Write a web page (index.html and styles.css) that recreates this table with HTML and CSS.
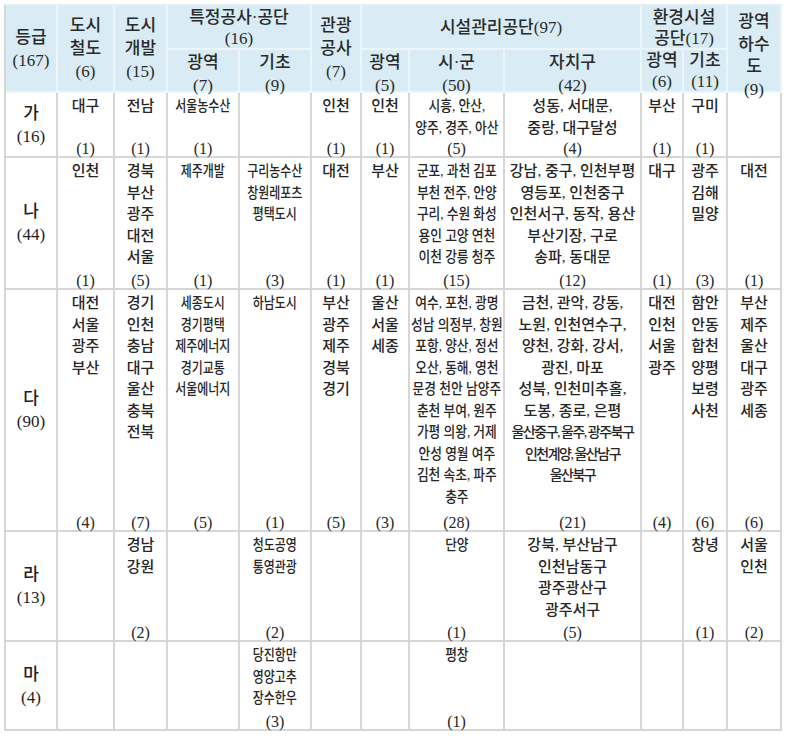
FILE: index.html
```html
<!DOCTYPE html>
<html lang="ko">
<head>
<meta charset="utf-8">
<title>등급별 지방공기업</title>
<link rel="stylesheet" href="styles.css">
</head>
<body>
<div class="sheet">
  <div class="grid">
    <div class="h mid r2">등급<br>(167)</div>
    <div class="h mid r2">도시<br>철도<br>(6)</div>
    <div class="h mid r2">도시<br>개발<br>(15)</div>
    <div class="h top c2">특정공사·공단<br>(16)</div>
    <div class="h mid r2">관광<br>공사<br>(7)</div>
    <div class="h mid c3">시설관리공단(97)</div>
    <div class="h top c2">환경시설<br>공단(17)</div>
    <div class="h top r2 tight">광역<br>하수<br>도<br>(9)</div>
    <div class="h sub">광역<br>(7)</div>
    <div class="h sub">기초<br>(9)</div>
    <div class="h sub">광역<br>(5)</div>
    <div class="h sub">시·군<br>(50)</div>
    <div class="h sub">자치구<br>(42)</div>
    <div class="h sub sm">광역<br>(6)</div>
    <div class="h sub sm">기초<br>(11)</div>

    <!-- 가 -->
    <div class="lab">가<br>(16)</div>
    <div class="c"><div class="t">대구</div><div class="n">(1)</div></div>
    <div class="c"><div class="t">전남</div><div class="n">(1)</div></div>
    <div class="c nar"><div class="t">서울농수산</div><div class="n">(1)</div></div>
    <div class="c"></div>
    <div class="c"><div class="t">인천</div><div class="n">(1)</div></div>
    <div class="c"><div class="t">인천</div><div class="n">(1)</div></div>
    <div class="c sg"><div class="t">시흥, 안산,<br>양주, 경주, 아산</div><div class="n">(5)</div></div>
    <div class="c"><div class="t">성동, 서대문,<br>중랑, 대구달성</div><div class="n">(4)</div></div>
    <div class="c"><div class="t">부산</div><div class="n">(1)</div></div>
    <div class="c"><div class="t">구미</div><div class="n">(1)</div></div>
    <div class="c"></div>

    <!-- 나 -->
    <div class="lab">나<br>(44)</div>
    <div class="c"><div class="t">인천</div><div class="n">(1)</div></div>
    <div class="c"><div class="t">경북<br>부산<br>광주<br>대전<br>서울</div><div class="n">(5)</div></div>
    <div class="c nar"><div class="t">제주개발</div><div class="n">(1)</div></div>
    <div class="c nar"><div class="t">구리농수산<br>창원레포츠<br>평택도시</div><div class="n">(3)</div></div>
    <div class="c"><div class="t">대전</div><div class="n">(1)</div></div>
    <div class="c"><div class="t">부산</div><div class="n">(1)</div></div>
    <div class="c sg"><div class="t">군포, 과천 김포<br>부천 전주, 안양<br>구리, 수원 화성<br>용인 고양 연천<br>이천 강릉 청주</div><div class="n">(15)</div></div>
    <div class="c"><div class="t">강남, 중구, 인천부평<br>영등포, 인천중구<br>인천서구, 동작, 용산<br>부산기장, 구로<br>송파, 동대문</div><div class="n">(12)</div></div>
    <div class="c"><div class="t">대구</div><div class="n">(1)</div></div>
    <div class="c"><div class="t">광주<br>김해<br>밀양</div><div class="n">(3)</div></div>
    <div class="c"><div class="t">대전</div><div class="n">(1)</div></div>

    <!-- 다 -->
    <div class="lab">다<br>(90)</div>
    <div class="c"><div class="t">대전<br>서울<br>광주<br>부산</div><div class="n">(4)</div></div>
    <div class="c"><div class="t">경기<br>인천<br>충남<br>대구<br>울산<br>충북<br>전북</div><div class="n">(7)</div></div>
    <div class="c nar"><div class="t">세종도시<br>경기평택<br>제주에너지<br>경기교통<br>서울에너지</div><div class="n">(5)</div></div>
    <div class="c nar"><div class="t">하남도시</div><div class="n">(1)</div></div>
    <div class="c"><div class="t">부산<br>광주<br>제주<br>경북<br>경기</div><div class="n">(5)</div></div>
    <div class="c"><div class="t">울산<br>서울<br>세종</div><div class="n">(3)</div></div>
    <div class="c sg"><div class="t">여수, 포천, 광명<br>성남 의정부, 창원<br>포항, 양산, 정선<br>오산, 동해, 영천<br>문경 천안 남양주<br>춘천 부여, 원주<br>가평 의왕, 거제<br>안성 영월 여주<br>김천 속초, 파주<br>충주</div><div class="n">(28)</div></div>
    <div class="c"><div class="t">금천, 관악, 강동,<br>노원, 인천연수구,<br>양천, 강화, 강서,<br>광진, 마포<br>성북, 인천미추홀,<br>도봉, 종로, 은평<br><span class="sq">울산중구, 울주, 광주북구</span><br><span class="sq">인천계양, 울산남구</span><br><span class="sq">울산북구</span></div><div class="n">(21)</div></div>
    <div class="c"><div class="t">대전<br>인천<br>서울<br>광주</div><div class="n">(4)</div></div>
    <div class="c"><div class="t">함안<br>안동<br>합천<br>양평<br>보령<br>사천</div><div class="n">(6)</div></div>
    <div class="c"><div class="t">부산<br>제주<br>울산<br>대구<br>광주<br>세종</div><div class="n">(6)</div></div>

    <!-- 라 -->
    <div class="lab">라<br>(13)</div>
    <div class="c"></div>
    <div class="c"><div class="t">경남<br>강원</div><div class="n">(2)</div></div>
    <div class="c"></div>
    <div class="c nar"><div class="t">청도공영<br>통영관광</div><div class="n">(2)</div></div>
    <div class="c"></div>
    <div class="c"></div>
    <div class="c sg"><div class="t">단양</div><div class="n">(1)</div></div>
    <div class="c"><div class="t">강북, 부산남구<br>인천남동구<br>광주광산구<br>광주서구</div><div class="n">(5)</div></div>
    <div class="c"></div>
    <div class="c"><div class="t">창녕</div><div class="n">(1)</div></div>
    <div class="c"><div class="t">서울<br>인천</div><div class="n">(2)</div></div>

    <!-- 마 -->
    <div class="lab">마<br>(4)</div>
    <div class="c"></div>
    <div class="c"></div>
    <div class="c"></div>
    <div class="c nar"><div class="t">당진항만<br>영양고추<br>장수한우</div><div class="n">(3)</div></div>
    <div class="c"></div>
    <div class="c"></div>
    <div class="c sg"><div class="t">평창</div><div class="n">(1)</div></div>
    <div class="c"></div>
    <div class="c"></div>
    <div class="c"></div>
    <div class="c"></div>
  </div>
</div>
</body>
</html>
```

FILE: styles.css
```css
html, body {
  margin: 0;
  background: #ffffff;
}

.sheet {
  padding: 4px 0 0 4px;
  font-family: "Liberation Serif", "Noto Sans CJK KR", serif;
  color: #222222;
}

.grid {
  display: grid;
  width: max-content;
  grid-template-columns: 52px 57px 53px 72px 72px 50px 48px 95px 137px 42px 44px 54px;
  grid-template-rows: 44px 43px 65px 132px 242px 110px 89px;
  border-left: 2px solid #d6d6d6;
  border-top: 2px solid #e4eef3;
}

.grid > div {
  box-sizing: border-box;
  border-right: 2px solid #d6d6d6;
  border-bottom: 2px solid #d6d6d6;
  min-width: 0;
}

.r2 { grid-row: span 2; }
.c2 { grid-column: span 2; }
.c3 { grid-column: span 3; }

/* header */
.h {
  background: #d9ecf5;
  border-color: #edf5f9 !important;
  display: flex;
  flex-direction: column;
  align-items: center;
  text-align: center;
  font-size: 17px;
  line-height: 23px;
  font-weight: 500;
  color: #2a2a2a;
  white-space: nowrap;
}

.h.mid { justify-content: center; }
.h.top { justify-content: flex-start; padding-top: 1px; line-height: 21px; }
.h.tight { padding-top: 5px; line-height: 22.5px; }
.h.sub { justify-content: flex-start; padding-top: 1px; line-height: 23px; }
.h.sm { padding-top: 0; line-height: 21px; }

/* row labels */
.lab {
  display: flex;
  align-items: center;
  justify-content: center;
  text-align: center;
  font-size: 17px;
  line-height: 23px;
  font-weight: 500;
  color: #1e1e1e;
}

/* body cells */
.c {
  display: flex;
  flex-direction: column;
  justify-content: space-between;
  text-align: center;
  font-size: 15px;
  line-height: 21.5px;
  font-weight: 500;
  padding-top: 3px;
  color: #262626;
}

.t {
  white-space: nowrap;
}

.n {
  font-size: 16px;
  line-height: 17px;
  font-weight: 400;
  margin-bottom: -1px;
  white-space: nowrap;
}

.nar .t {
  width: 125%;
  margin-left: -12.5%;
  transform: scaleX(0.8);
}

.sg .t {
  width: 118%;
  margin-left: -9%;
  transform: scaleX(0.85);
}

.sq {
  font-size: 14px;
  letter-spacing: -1.5px;
}
```
